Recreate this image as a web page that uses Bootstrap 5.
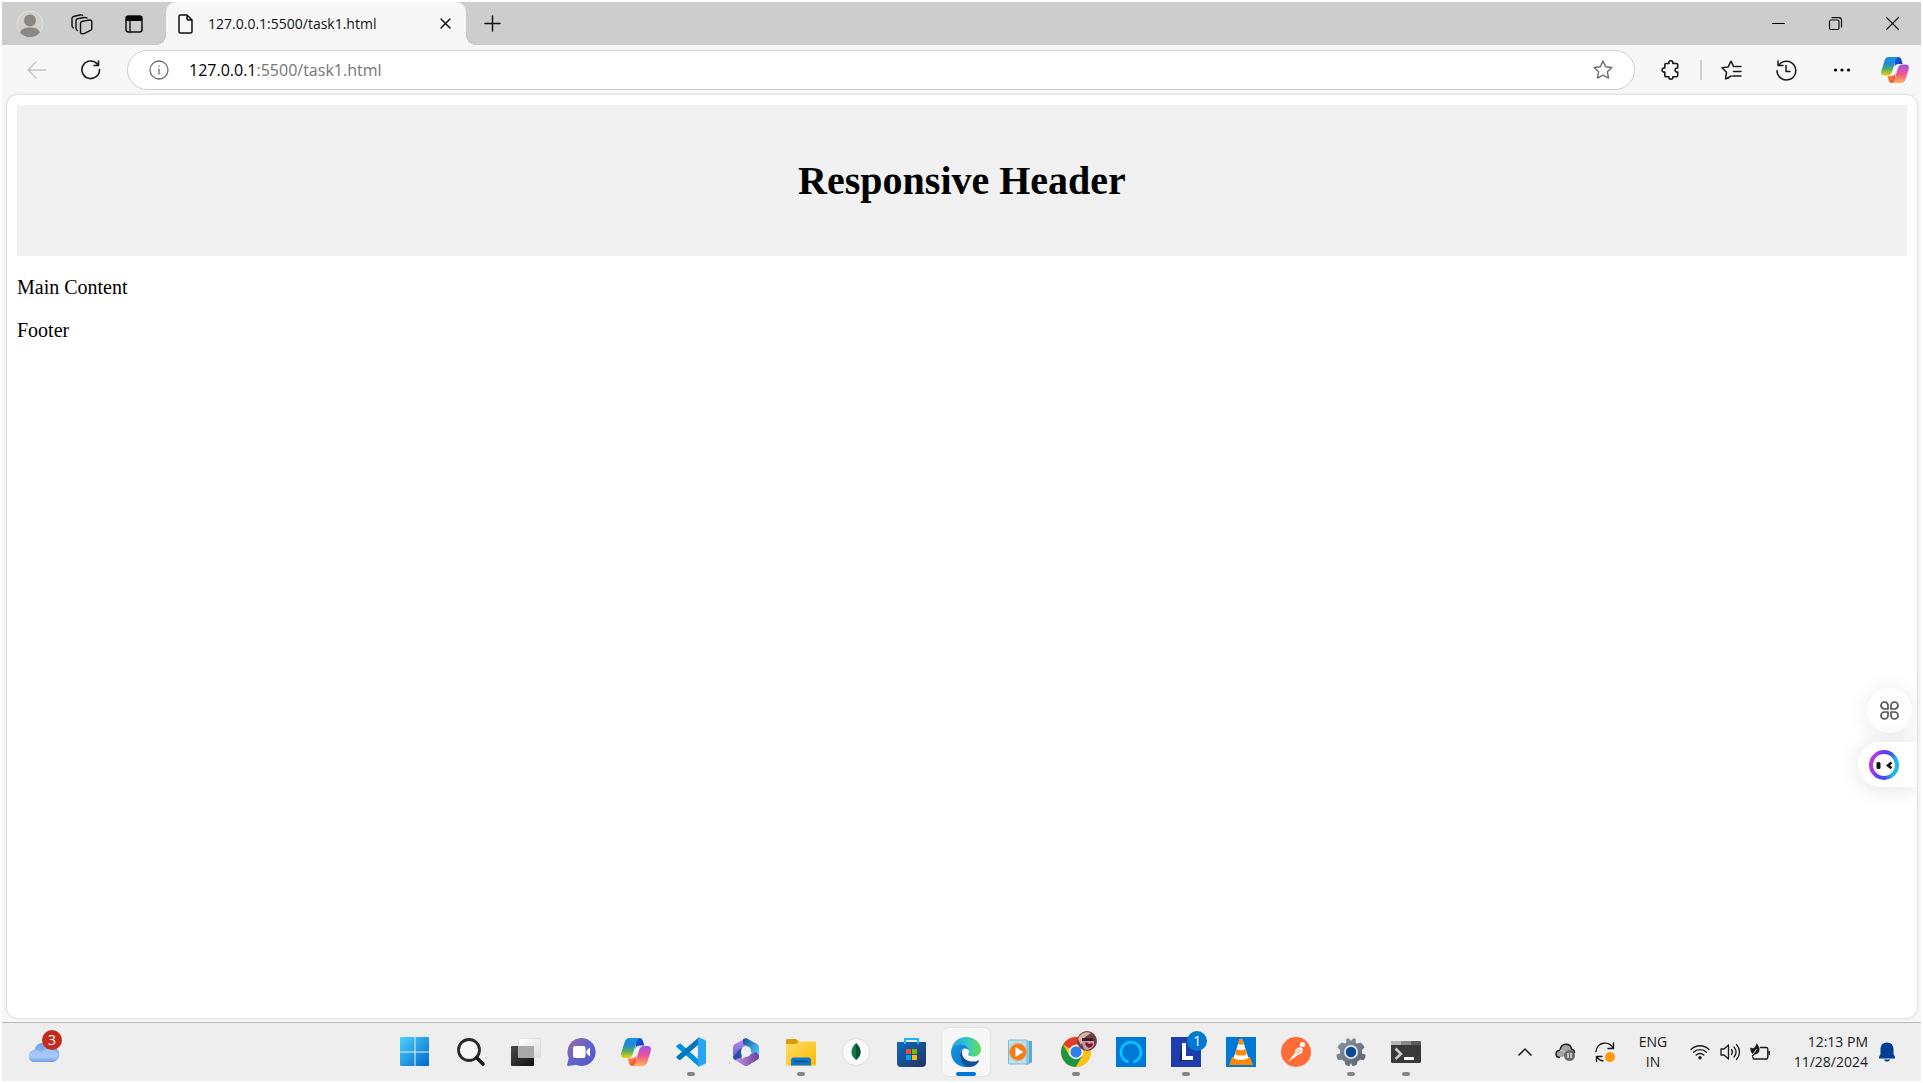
<!DOCTYPE html>
<html lang="en">
<head>
<meta charset="utf-8">
<meta name="viewport" content="width=device-width, initial-scale=1">
<title>127.0.0.1:5500/task1.html</title>
<link href="https://cdn.jsdelivr.net/npm/bootstrap@5.3.0/dist/css/bootstrap.min.css" rel="stylesheet">
<style>
  body { padding: 2px; background: #fff; color: #1b1b1b; font-family: "Open Sans", "Noto Sans", sans-serif; font-size: 14px; line-height: 20px; }
  svg { display: block; overflow: visible; }
  .screen { min-height: calc(100vh - 4px); }
  .ui-btn { padding: 0; border: 0; background: none; color: inherit; display: flex; align-items: center; justify-content: center; flex: none; }
  .ln { fill: none; stroke: currentColor; stroke-linecap: round; stroke-linejoin: round; }

  /* tab strip */
  .tab-strip { height: 43px; background: #cdcdcd; padding-left: 2px; color: #111; }
  .strip-btn { width: 52px; height: 43px; }
  .win-btn { width: 57px; height: 43px; }
  .page-tab { position: relative; width: 300px; height: 43px; margin-left: 6px; padding: 0 12px; background: #f7f7f7; border-radius: 10px 10px 0 0; font-size: 14px; }
  .page-tab::before, .page-tab::after { content: ""; position: absolute; bottom: 0; width: 10px; height: 10px; }
  .page-tab::before { right: 100%; background: radial-gradient(circle at 0 0, transparent 10px, #f7f7f7 10px); }
  .page-tab::after { left: 100%; background: radial-gradient(circle at 100% 0, transparent 10px, #f7f7f7 10px); }
  .page-tab a { color: #111; margin-left: 15px; }

  /* toolbar */
  .tool-strip { height: 50px; background: #f7f7f7; padding-left: 8px; color: #1b1b1b; }
  .nav-btn { width: 54px; height: 40px; }
  .tool-btn { width: 55px; height: 40px; }
  .address { height: 40px; margin-left: 9px; border: 1px solid #cfcfcf; border-radius: 20px; background: #fff; padding: 0 21px; font-size: 16px; }
  .address label { color: #000; margin-left: 20px; }
  .address input { border: 0; padding: 0; outline: 0; color: #767676; background: none; min-width: 0; }
  .tool-rule { width: 2px; height: 20px; background: #cfcfcf; margin: 0 2px 0 3px; }

  /* page view */
  .frame-area { background: #f7f7f7; padding: 0 4px 4px 5px; }
  .viewport-pane { background: #fff; border-radius: 11px; box-shadow: 0 0 3px rgba(0,0,0,.22); padding: 10px; overflow: hidden; color: #000; font-family: "Liberation Serif", serif; font-size: 20px; line-height: 23px; }
  .hero { background: #f1f1f1; padding: 53px 24px 52px; text-align: center; }
  .hero h1 { font-size: 40px; line-height: 46px; font-weight: 700; margin: 0; }
  .viewport-pane p { margin: 20px 0 0; }
  .floaters { position: absolute; right: 0; top: 593px; gap: 9px; }
  .float-round { width: 45px; height: 45px; border-radius: 50%; background: #fff; margin-right: 5px; box-shadow: 0 2px 24px rgba(0,0,0,.09); color: #505058; }
  .float-pill { width: 59px; height: 45px; border-radius: 23px 0 0 23px; background: #fff; padding-left: 11px; justify-content: flex-start; box-shadow: 0 2px 24px rgba(0,0,0,.11); }

  /* taskbar */
  .task-strip { height: 59px; background: #eee; border-top: 1px solid #b9b9b9; }
  .task-left { width: 20%; padding-left: 26px; }
  .task-list { padding-left: 1px; }
  .task-slot { width: 55px; }
  .task-slot:first-child { width: 57px; }
  .task-btn { position: relative; width: 48px; height: 48px; border-radius: 6px; }
  .task-btn.running::after { content: ""; position: absolute; bottom: 0; left: 20px; width: 8px; height: 4px; border-radius: 2px; background: #868686; }
  .task-btn.current { background: #f7f7f7; box-shadow: 0 0 1px 1px #e4e4e4; }
  .task-btn.current::after { left: 14px; width: 20px; background: #0078d4; }
  .count { position: absolute; width: 20px; height: 20px; border-radius: 50%; color: #fff; text-align: center; line-height: 20px; }
  .count-red { background: #c42b1c; left: 14px; top: -12px; }
  .count-blue { background: #0078d4; left: 25px; top: 3px; }
  .tray-btn { width: 40px; height: 48px; }
  .tray-lang { width: 56px; }
  .tray-status { gap: 10px; width: 80px; margin-left: 9px; }
  .tray-clock { width: 98px; text-align: right; }
  .tray-bell { width: 38px; margin-right: 15px; }
</style>
<script src="https://cdn.jsdelivr.net/npm/bootstrap@5.3.0/dist/js/bootstrap.bundle.min.js"></script>
</head>
<body>
<svg width="0" height="0" class="position-absolute" aria-hidden="true">
  <defs>
    <linearGradient id="cpA" x1="0" y1="0" x2="0" y2="1"><stop offset="0" stop-color="#1493e6"/><stop offset=".35" stop-color="#2388d8"/><stop offset=".65" stop-color="#4fae62"/><stop offset="1" stop-color="#f3cf14"/></linearGradient>
    <linearGradient id="cpB" x1="0" y1="0" x2="1" y2="1"><stop offset="0" stop-color="#1b63e0"/><stop offset="1" stop-color="#1334b8"/></linearGradient>
    <linearGradient id="cpC" x1="0" y1="0" x2="0" y2="1"><stop offset="0" stop-color="#a450ef"/><stop offset=".5" stop-color="#ee5490"/><stop offset="1" stop-color="#ffb35c"/></linearGradient>
    <linearGradient id="cpD" x1="0" y1="0" x2="1" y2="1"><stop offset="0" stop-color="#ffa04c"/><stop offset="1" stop-color="#e8402c"/></linearGradient>
    <symbol id="copilot" viewBox="0 0 30 28">
      <path fill="url(#cpB)" d="M15 0h3.500c2 0 2.800 1 3.400 3l1.400 4.500h-4c-3 0-4 1-4.800 3.500z"/>
      <path fill="url(#cpA)" d="M8.500 0H19c-2 .4-3 2-3.600 4L12 15.500c-.9 3-2.200 4.500-5.200 4.500H3.400C.3 20-.6 17.500.4 14.500L3.500 4.500C4.500 1.500 5.700 0 8.500 0z"/>
      <path fill="url(#cpD)" d="M15 28h-3.500c-2 0-2.800-1-3.400-3l-1.400-4.500h4c3 0 4-1 4.800-3.500z"/>
      <path fill="url(#cpC)" d="M21.500 28H11c2-.4 3-2 3.600-4L18 12.500c.9-3 2.200-4.500 5.200-4.500h3.400c3.100 0 4 2.500 3 5.500l-3.100 10c-1 3-2.200 4.500-5 4.500z"/>
    </symbol>
    <linearGradient id="winG" x1="0" y1="0" x2="1" y2="1"><stop offset="0" stop-color="#4dd2ff"/><stop offset="1" stop-color="#0067c9"/></linearGradient>
    <linearGradient id="darkG" x1="0" y1="0" x2="1" y2="1"><stop offset="0" stop-color="#4a4a4a"/><stop offset="1" stop-color="#111"/></linearGradient>
    <linearGradient id="lightG" x1="0" y1="0" x2="1" y2="1"><stop offset="0" stop-color="#fff"/><stop offset="1" stop-color="#ddd"/></linearGradient>
    <linearGradient id="chatG" x1="0" y1="0" x2="1" y2="1"><stop offset="0" stop-color="#9c6aa8"/><stop offset=".5" stop-color="#6364c9"/><stop offset="1" stop-color="#4f55c4"/></linearGradient>
    <linearGradient id="mA" x1="0" y1="0" x2="0" y2="1"><stop offset="0" stop-color="#c58bea"/><stop offset="1" stop-color="#4360c8"/></linearGradient>
    <linearGradient id="mB" x1="0" y1="0" x2="1" y2="1"><stop offset="0" stop-color="#164ba5"/><stop offset="1" stop-color="#56dcff"/></linearGradient>
    <linearGradient id="mC" x1="0" y1="0" x2="1" y2="0"><stop offset="0" stop-color="#c9a0ee"/><stop offset="1" stop-color="#6a3f98"/></linearGradient>
    <linearGradient id="foldG" x1="0" y1="0" x2="1" y2="1"><stop offset="0" stop-color="#ffdd68"/><stop offset="1" stop-color="#fcb900"/></linearGradient>
    <linearGradient id="storeG" x1="0" y1="0" x2="1" y2="1"><stop offset="0" stop-color="#0a6cc4"/><stop offset="1" stop-color="#27315f"/></linearGradient>
    <linearGradient id="edA" x1="0" y1="0" x2="1" y2="0"><stop offset="0" stop-color="#1ea3e0"/><stop offset=".5" stop-color="#2fc5cf"/><stop offset="1" stop-color="#68e04f"/></linearGradient>
    <linearGradient id="edB" x1="0" y1="0" x2="1" y2="1"><stop offset="0" stop-color="#1a93de"/><stop offset="1" stop-color="#0078d4"/></linearGradient>
    <linearGradient id="gearG" x1="0" y1="0" x2="1" y2="1"><stop offset="0" stop-color="#8d98a2"/><stop offset="1" stop-color="#56616b"/></linearGradient>
    <linearGradient id="ringG" x1="0" y1="0.800" x2="0.800" y2="1"><stop offset="0" stop-color="#b43ae0"/><stop offset=".35" stop-color="#5a3df5"/><stop offset=".7" stop-color="#3a55f5"/><stop offset="1" stop-color="#20b6ea"/></linearGradient>
    <linearGradient id="cloudG" x1="0" y1="0" x2="0" y2="1"><stop offset="0" stop-color="#6f9fe6"/><stop offset=".6" stop-color="#93b9f2"/><stop offset="1" stop-color="#6f9ce8"/></linearGradient>
    <linearGradient id="cloudF" x1="0" y1="0" x2="0" y2="1"><stop offset="0" stop-color="#9dc2f8"/><stop offset=".6" stop-color="#a9c9f8"/><stop offset="1" stop-color="#6f9ce8"/></linearGradient>
  </defs>
</svg>

<div class="screen d-flex flex-column">
  <header>
    <div class="tab-strip d-flex align-items-center">
      <button class="ui-btn strip-btn" aria-label="Profile"><svg width="28" height="28" viewBox="0 0 28 28"><circle cx="14" cy="14" r="13" fill="#d3d0cc" stroke="#e3e2df"/><circle cx="14" cy="10.500" r="6" fill="#8b8785"/><path d="M4 22.500C6 18 10 17.500 14 17.500s8 .5 10 5a13 13 0 0 1-20 0z" fill="#8b8785"/></svg></button>
      <button class="ui-btn strip-btn" aria-label="Workspaces"><svg width="22" height="22" viewBox="0 0 22 22" class="ln" stroke-width="1.400"><path d="M11.500 8.300L18.500 7q2.300-.2 2.300 1.800v6.400q0 1.500-1.300 2.200l-6 3q-3 1.200-4-.8v-9q0-2 2-2.300zM6.500 17.500Q5 16.800 5 15.200V7.800q0-1.600 1.500-2l6.500-1.300q1.800-.3 3 .5M2.300 14.800Q1 14 1 12.500V5.500q0-1.600 1.500-2L9 2q1.800-.3 2.600.4"/></svg></button>
      <button class="ui-btn strip-btn" aria-label="Tab actions"><svg width="18" height="18" viewBox="0 0 18 18"><rect x="1" y="1" width="16" height="16" rx="2.500" class="ln" stroke-width="1.500"/><path d="M1 6V3a2 2 0 0 1 2-2h12a2 2 0 0 1 2 2v3z"/><path d="M5 6v11" class="ln" stroke-width="1.400"/></svg></button>
      <div class="page-tab d-flex align-items-center">
        <svg width="15" height="20" viewBox="0 0 15 20" class="ln" stroke-width="1.500"><path d="M2.500 1H9l5 5v11.500c0 1-.5 1.500-1.500 1.500h-10C1.500 19 1 18.500 1 17.500v-15C1 1.500 1.500 1 2.500 1zM9 1v4c0 .7.300 1 1 1h4"/></svg>
        <a href="#view" class="text-decoration-none flex-grow-1">127.0.0.1:5500/task1.html</a>
        <button class="ui-btn" aria-label="Close tab"><svg width="16" height="11" viewBox="0 0 16 11" class="ln" stroke-width="1.500"><path d="M3 1l9 9M12 1l-9 9"/></svg></button>
      </div>
      <button class="ui-btn strip-btn" aria-label="New tab"><svg width="17" height="17" viewBox="0 0 17 17" class="ln" stroke-width="1.500"><path d="M8.500 1v15M1 8.500h15"/></svg></button>
      <div class="d-flex ms-auto">
        <button class="ui-btn win-btn" aria-label="Minimize"><svg width="13" height="13" viewBox="0 0 13 13"><path d="M0 6h13v1H0z"/></svg></button>
        <button class="ui-btn win-btn" aria-label="Restore"><svg width="13" height="13" viewBox="0 0 13 13" class="ln" stroke-width="1.200"><rect x=".5" y="3" width="9.500" height="9.500" rx="1.500"/><path d="M3 .6h7c1.600 0 2.500.9 2.500 2.500V10"/></svg></button>
        <button class="ui-btn win-btn" aria-label="Close"><svg width="13" height="13" viewBox="0 0 13 13" class="ln" stroke-width="1.200"><path d="M.5.5l12 12M12.500.5l-12 12"/></svg></button>
      </div>
    </div>
    <div class="tool-strip d-flex align-items-center">
      <button class="ui-btn nav-btn" aria-label="Back" disabled><svg width="20" height="18" viewBox="0 0 20 18" class="ln" stroke-width="1.300" color="#c4c4c4"><path d="M19 9H1M9 1L1 9l8 8"/></svg></button>
      <button class="ui-btn nav-btn" aria-label="Refresh"><svg width="20" height="20" viewBox="0 0 20 20" class="ln" stroke-width="1.600"><path d="M18.500 9.500A8.800 8.800 0 1 1 16.500 4.200M17.500 1v4.500H13"/></svg></button>
      <div class="address d-flex align-items-center flex-grow-1">
        <svg width="20" height="20" viewBox="0 0 20 20" class="ln" stroke-width="1.300" color="#6d6d6d"><circle cx="10" cy="10" r="9"/><path d="M10 9v5M10 6v.2"/></svg>
        <label for="url">127.0.0.1</label><input id="url" type="text" class="flex-grow-1" value=":5500/task1.html">
        <button class="ui-btn" aria-label="Favorite"><svg width="20" height="20" viewBox="0 0 20 20" class="ln" stroke-width="1.400" color="#6d6d6d"><path d="M10 1l2.700 5.700 6.200.8-4.500 4.300 1.100 6.300L10 15.200l-5.500 2.900 1.100-6.300L1.100 7.500l6.200-.8z"/></svg></button>
      </div>
      <button class="ui-btn nav-btn ms-2" aria-label="Extensions"><svg width="19" height="20" viewBox="0 0 19 20" class="ln" stroke-width="1.600"><path d="M5 3.500h3c-.5-1.500.4-2.700 1.900-2.700s2.400 1.200 1.900 2.700h3.700c.8 0 1.200.4 1.200 1.200V8c-3.400-.6-3.400 4.600 0 4v3.500c0 .8-.4 1.200-1.200 1.200h-3.700c.5 1.500-.4 2.600-1.900 2.600S7.500 18.200 8 16.700H5c-.8 0-1.200-.4-1.200-1.200V12C2.200 12.400 1 11.500 1 10s1.200-2.400 2.800-2V4.700c0-.8.400-1.200 1.200-1.200z"/></svg></button>
      <span class="tool-rule"></span>
      <button class="ui-btn tool-btn" aria-label="Favorites"><svg width="21" height="20" viewBox="0 0 21 20" class="ln" stroke-width="1.500"><path d="M7.500 18l-3 .8 1-6.500L1 7.800l6.200-.9L10 1.200l2.700 5.500M14 6.500h6M12.500 11.500H20M11.500 16H20M5 18.800l5-2.800"/></svg></button>
      <button class="ui-btn tool-btn" aria-label="History"><svg width="21" height="21" viewBox="0 0 21 21" class="ln" stroke-width="1.500"><path d="M1 10.500a9.400 9.400 0 1 0 2-5.700M2 1v4.500h5M10 5.500v6h4"/></svg></button>
      <button class="ui-btn tool-btn" aria-label="Settings and more"><svg width="18" height="4" viewBox="0 0 18 4"><circle cx="2.500" cy="2" r="1.600"/><circle cx="9" cy="2" r="1.600"/><circle cx="15.500" cy="2" r="1.600"/></svg></button>
      <button class="ui-btn strip-btn" aria-label="Copilot"><svg width="28" height="26"><use href="#copilot"/></svg></button>
    </div>
  </header>

  <div class="frame-area flex-grow-1 d-flex">
    <main id="view" class="viewport-pane flex-grow-1 position-relative">
      <div class="hero"><h1>Responsive Header</h1></div>
      <p>Main Content</p>
      <p>Footer</p>
      <div class="floaters d-flex flex-column align-items-end">
        <button class="ui-btn float-round" aria-label="Tools"><svg width="19" height="19" viewBox="0 0 19 19" class="ln" stroke-width="1.700"><path d="M8 8H4.500A3.500 3.500 0 1 1 8 4.500zM11 8V4.500A3.500 3.500 0 1 1 14.500 8zM8 11v3.500A3.500 3.500 0 1 1 4.500 11zM11 11h3.500a3.500 3.500 0 1 1-3.500 3.500z"/></svg></button>
        <button class="ui-btn float-pill" aria-label="Assistant"><svg width="30" height="30" viewBox="0 0 30 30"><circle cx="15" cy="15" r="13" fill="#fff" stroke="url(#ringG)" stroke-width="4"/><rect x="7.500" y="12" width="4" height="7" rx="1.500" fill="#111"/><path d="M22.500 12.500L19 15.500l3.500 2.800" fill="none" stroke="#111" stroke-width="2.600"/></svg></button>
      </div>
    </main>
  </div>

  <footer class="task-strip d-flex align-items-center">
    <div class="task-left">
      <button class="ui-btn position-relative" aria-label="Weather"><svg width="32" height="20" viewBox="0 0 32 20"><path d="M7 20a6 6 0 0 1-.5-12A8.500 8.500 0 0 1 22 4.500 7 7 0 0 1 25 20z" fill="url(#cloudG)"/><path d="M6 8.500c4-1 6 .5 7 2 2-3 6-4 10-3 5 .5 7 3 7 6 0 4-3 6.500-7 6.500H7c-3.500 0-6-2-6-5.500 0-3 2-5.500 5-6z" fill="url(#cloudF)"/></svg><span class="count count-red">3</span></button>
    </div>
    <nav class="task-list d-flex" aria-label="Taskbar">
      <div class="task-slot d-flex justify-content-center"><button class="ui-btn task-btn" aria-label="Start"><svg width="30" height="30" viewBox="0 0 30 30"><path fill="url(#winG)" d="M1 0h13.500v14.500H0V1a1 1 0 0 1 1-1zm14.500 0H28a1 1 0 0 1 1 1v13.500H15.500zM0 15.500h14.500V29H1a1 1 0 0 1-1-1zm15.500 0H29V28a1 1 0 0 1-1 1H15.500z"/></svg></button></div>
      <div class="task-slot d-flex justify-content-center"><button class="ui-btn task-btn" aria-label="Search"><svg width="28" height="28" viewBox="0 0 28 28"><circle cx="12" cy="12" r="10.500" fill="#f6f6f6" stroke="#2b2b2b" stroke-width="2.800"/><path d="M19.500 19.500L26 26" stroke="#1c1c1c" stroke-width="3.600" stroke-linecap="round"/></svg></button></div>
      <div class="task-slot d-flex justify-content-center"><button class="ui-btn task-btn" aria-label="Task view"><svg width="30" height="28" viewBox="0 0 30 28"><rect y="8" width="23" height="20" rx="1" fill="url(#darkG)"/><rect x="7.500" y=".5" width="22" height="19" rx="1" fill="url(#lightG)" stroke="#d6d6d6" stroke-width=".6"/><rect x="7.500" y="8" width="15.500" height="12" fill="#aaa"/></svg></button></div>
      <div class="task-slot d-flex justify-content-center"><button class="ui-btn task-btn" aria-label="Chat"><svg width="29" height="28" viewBox="0 0 29 28"><path d="M15 0a14 14 0 1 1-6 26.800L1.500 28C0 28 0 27 .3 26l1.500-6A14 14 0 0 1 15 0z" fill="url(#chatG)"/><rect x="6" y="8" width="12.500" height="12" rx="2" fill="#fff"/><path d="M19.500 12.500l3.500-3v9l-3.500-3z" fill="#fff"/></svg></button></div>
      <div class="task-slot d-flex justify-content-center"><button class="ui-btn task-btn" aria-label="Copilot app"><svg width="30" height="28"><use href="#copilot"/></svg></button></div>
      <div class="task-slot d-flex justify-content-center"><button class="ui-btn task-btn running" aria-label="Visual Studio Code"><svg width="30" height="30" viewBox="0 0 30 30"><path d="M2 7.500l1.500-.8c.6-.2 1-.1 1.500.3L22 22v7L.8 10.300c-.7-.6-.6-1.200-.1-1.700z" fill="#0091dc"/><path d="M2 22l1.500.9c.6.200 1 .1 1.500-.3L22 8V1L.8 19.200c-.7.600-.6 1.200-.1 1.700z" fill="#0078bd"/><path d="M22 0l7 3c.7.400 1 .8 1 1.500v21c0 .7-.3 1.200-1 1.500l-7 3z" fill="#26a5f2"/></svg></button></div>
      <div class="task-slot d-flex justify-content-center"><button class="ui-btn task-btn" aria-label="Microsoft 365"><svg width="26" height="28" viewBox="0 0 26 28"><path d="M13 0L2 6C.6 7 0 8 0 9.500v9L8.500 23V10L17 5z" fill="url(#mA)"/><path d="M10 1.200L13 0l11 6c1.400 1 2 2 2 3.500v9L17.500 14V10L10 6z" fill="url(#mB)"/><path d="M0 17v2c0 1.300.7 2.300 2 3l9 5.400c1.400.8 2.600.8 4 0L24 22c1.300-.8 2-1.700 2-3.200V17l-3-3-5.500 2L9 21z" fill="url(#mC)"/><path d="M0 18.500l8.500-9V19L2 22C.7 21 0 20 0 18.500z" fill="#2f4ca8"/><circle cx="13" cy="14" r="5" fill="#eee"/></svg></button></div>
      <div class="task-slot d-flex justify-content-center"><button class="ui-btn task-btn running" aria-label="File Explorer"><svg width="30" height="28" viewBox="0 0 30 28"><path d="M1.500 1H9c1 0 1.500.2 2 .8L13 4v5H0V2.500C0 1.500.5 1 1.500 1z" fill="#dc9c08"/><path d="M0 6h10l3-2.500h15.500c1 0 1.500.5 1.500 1.500v21c0 1-.5 1.500-1.500 1.500h-27C.5 27.500 0 27 0 26z" fill="url(#foldG)"/><path d="M5 27.500V22c0-1.500 1-2.500 2.500-2.500h15c1.500 0 2.500 1 2.500 2.500v5.500z" fill="#0f77c8"/><path d="M8.500 23.500h13" stroke="#064c87" stroke-width="1.500"/></svg></button></div>
      <div class="task-slot d-flex justify-content-center"><button class="ui-btn task-btn" aria-label="MongoDB Compass"><svg width="28" height="28" viewBox="0 0 28 28"><circle cx="14" cy="14" r="13.500" fill="#fbfbfb" stroke="#dcdcdc"/><path d="M14 5c3 3 4.500 6 4.500 9s-1.500 5.500-4.500 8c-3-2.500-4.500-5-4.500-8S11 8 14 5z" fill="#10774b"/><path d="M14 5c3 3 4.500 6 4.500 9s-1.500 5.500-4.500 8z" fill="#0a5238"/></svg></button></div>
      <div class="task-slot d-flex justify-content-center"><button class="ui-btn task-btn" aria-label="Microsoft Store"><svg width="29" height="29" viewBox="0 0 29 29"><path d="M0 4h29v21a4 4 0 0 1-4 4H4a4 4 0 0 1-4-4z" fill="url(#storeG)"/><path d="M8 6V1h13v5" fill="none" stroke="#1cb6f2" stroke-width="2"/><path fill="#f25022" d="M9 11h5v5H9z"/><path fill="#7fba00" d="M15 11h5v5h-5z"/><path fill="#00a4ef" d="M9 17h5v5H9z"/><path fill="#ffb900" d="M15 17h5v5h-5z"/></svg></button></div>
      <div class="task-slot d-flex justify-content-center"><button class="ui-btn task-btn running current" aria-label="Microsoft Edge"><svg width="30" height="30" viewBox="0 0 30 30"><path d="M.5 12C2 5 7.500 0 15 0c8.500 0 15 6 15 12.500 0 4.500-3.500 7-7.500 7-3.500 0-5.500-1-5.500-2.300 0-.8 1-1.200 1-3.200C18 10 13.500 7 9 7c-3.800 0-7 2-8.500 5z" fill="url(#edA)"/><path d="M0 15C0 10.500 4 7 9 7c4.500 0 9 3 9 6.500 0 0-1.500-2-4-2-3.500 0-5 3-5 6.500 0 5 4 10 9 11.600-1 .3-2 .4-3 .4C6.500 30 0 23.500 0 15z" fill="url(#edB)"/><path d="M12 12c-1.500.8-3 3-3 6 0 5.500 4 12 10 12 4 0 7.500-3 9-6 .3-.7-.3-1-1-.6-1.500.8-3 1.200-5 1.200-6 0-11-3.600-11-8.600 0-1.700.4-3.200 1-4z" fill="#124f96"/></svg></button></div>
      <div class="task-slot d-flex justify-content-center"><button class="ui-btn task-btn" aria-label="Media Player"><svg width="26" height="26" viewBox="0 0 26 26"><path d="M4 1l20 1v21l-5 3z" fill="#5aa9cf"/><path d="M2 1l19 1v22l-3 2z" fill="#8cc8e2"/><rect x=".5" y="1" width="18.500" height="24" rx="1" fill="#b9e0f0" stroke="#7db9d4"/><circle cx="10" cy="13" r="8.500" fill="#f07b1a" stroke="#f9a45a"/><path d="M7.500 8l8 5-8 5z" fill="#fff"/></svg></button></div>
      <div class="task-slot d-flex justify-content-center"><button class="ui-btn task-btn running" aria-label="Google Chrome"><svg width="30" height="30" viewBox="0 0 30 30"><circle cx="15" cy="15" r="15" fill="#fbc116"/><path d="M15 15L2 7.500A15 15 0 0 1 28 7.500H15z" fill="#e33b2e"/><path d="M15 15L8.500 18.700 2 7.500A15 15 0 0 0 15 30l6.500-11.200z" fill="#229342"/><path d="M15 7.500h13A15 15 0 0 1 15 30l6.500-11.200z" fill="#fbc116"/><circle cx="15" cy="15" r="7.200" fill="#fff"/><circle cx="15" cy="15" r="5.700" fill="#2f7de9"/><circle cx="26" cy="4" r="10" fill="#70404a"/><path d="M17 2c2-6 8-8 13-6l-6 4-4 8z" fill="#d9b5a8"/><path d="M21 4h12v4c-2 4-6 5-8 5s-4-5-4-9z" fill="#c89ba2"/><path d="M24 6c2-1 3 0 4 1 1-1 3-1 4 0 0 2-2 3-4 4-2-1-4-3-4-5z" fill="#7e1730"/><path d="M21 1h11v3H21z" fill="#3c1c26"/></svg></button></div>
      <div class="task-slot d-flex justify-content-center"><button class="ui-btn task-btn" aria-label="Alexa"><svg width="30" height="30" viewBox="0 0 30 30"><path fill="#0078d7" d="M0 0h30v30H0z"/><path d="M12.500 25A10 10 0 1 1 17.500 25" fill="none" stroke="#00caff" stroke-width="2.600"/></svg></button></div>
      <div class="task-slot d-flex justify-content-center"><button class="ui-btn task-btn running" aria-label="Lenovo Vantage"><svg width="30" height="30" viewBox="0 0 30 30"><path fill="#1f3eae" d="M0 0h30v30H0z"/><path d="M11 6L8 24h13l-3-4h-4z" fill="#14285f"/><path d="M11 6h4v13h7v4H11z" fill="#fff"/></svg><span class="count count-blue">1</span></button></div>
      <div class="task-slot d-flex justify-content-center"><button class="ui-btn task-btn" aria-label="VLC"><svg width="30" height="30" viewBox="0 0 30 30"><path fill="#0078d7" d="M0 0h30v30H0z"/><path d="M6 20h18l3 8H3z" fill="#ff8800"/><path d="M13.500 2.500c.6-1 2.400-1 3 0L22.500 21c-3 2.500-12 2.500-15 0z" fill="#f8f8f8"/><path d="M13.500 2.500c.6-1 2.400-1 3 0L18 7c-1.500 1-4.500 1-6 0zM10.500 12c2 1.600 7 1.600 9 0l1.500 5c-3 2-9 2-12 0z" fill="#ff8a0a"/></svg></button></div>
      <div class="task-slot d-flex justify-content-center"><button class="ui-btn task-btn" aria-label="Postman"><svg width="30" height="30" viewBox="0 0 30 30"><circle cx="15" cy="15" r="15" fill="#ff6c37"/><circle cx="21.500" cy="7.500" r="2.600" fill="#fff"/><path d="M19 10l3 2-1 4-4 2-10 7 6-8 2-5z" fill="#fff"/><path d="M12.500 17.500l5.500-5M16 17l4-4" stroke="#ff6c37" stroke-width=".8"/></svg></button></div>
      <div class="task-slot d-flex justify-content-center"><button class="ui-btn task-btn running" aria-label="Settings"><svg width="30" height="28" viewBox="0 0 30 28"><path d="M10.500 4.500L10 1.200Q12 0 12.700.3L15 3l2.300-2.700Q18 0 20 1.200l-.5 3.300 1.500 1L24.500 4.500Q28 7 28.500 9.500L26 12v3.500l3.500 1Q30 19 28 22l-4-.3-2.500 1.800L20.500 27q-2 1-4 1L15 25l-1.500 3q-2 0-4-1l-1-3.500L6 21.700 2 22Q0 19 .5 16.500l3.500-1V12L1.500 9.500Q2 7 5.500 4.500L9 5.500z" fill="url(#gearG)"/><circle cx="15" cy="14" r="7" fill="#dfe5ea"/><circle cx="15" cy="14" r="5.200" fill="#0b4a90"/></svg></button></div>
      <div class="task-slot d-flex justify-content-center"><button class="ui-btn task-btn running" aria-label="Terminal"><svg width="30" height="22" viewBox="0 0 30 22"><rect width="30" height="22" rx="1.500" fill="#3a3a3a"/><path d="M0 4V1.500C0 .5.500 0 1.500 0H10v4z" fill="#b6b6b6"/><path d="M10 0h10v4H10z" fill="#888"/><path d="M20 0h8.500c1 0 1.500.5 1.500 1.500V4H20z" fill="#5c5c5c"/><path d="M4.500 7.500L10 13l-5.500 5" fill="none" stroke="#c9c9c9" stroke-width="2.600"/><path d="M13 16h10v3H13z" fill="#fff"/></svg></button></div>
    </nav>
    <div class="d-flex align-items-center ms-auto">
      <button class="ui-btn tray-btn" aria-label="Hidden icons"><svg width="14" height="8" viewBox="0 0 14 8" class="ln" stroke-width="1.600"><path d="M1 7l6-6 6 6"/></svg></button>
      <button class="ui-btn tray-btn" aria-label="OneDrive"><svg width="20" height="18" viewBox="0 0 20 18"><path d="M5 14.500C2.500 14.500 1 13 1 11s1.500-3.600 4-3.800C5.500 3.500 8 1.200 11 1.200c3 0 5 1.800 5.500 4.800 2 .5 3 2 3 4" fill="#a6a6a6" stroke="#1b1b1b" stroke-width="1.500"/><path d="M5 7.200c3 0 5 2 8 4" stroke="#d5d5d5" fill="none"/><circle cx="14.500" cy="12.500" r="5.500" fill="#6b6b6b"/><path d="M13 10v5M16 10v5" stroke="#fff" stroke-width="1.200"/></svg></button>
      <button class="ui-btn tray-btn" aria-label="Windows Update"><svg width="20" height="20" viewBox="0 0 20 20" class="ln" stroke-width="1.400"><path d="M1 9.500A9 9 0 0 1 18 6M18.500 1v5.500H13M8 19c-3-.5-5-2-6-4M1.500 19.500V14.500H7"/><circle cx="15" cy="15" r="5" fill="#ff9800" stroke="none"/></svg></button>
      <button class="ui-btn tray-lang" aria-label="Language"><span>ENG<br>IN</span></button>
      <button class="ui-btn tray-status" aria-label="Network, volume, battery">
        <svg width="20" height="16" viewBox="0 0 20 16" class="ln" stroke-width="1.400"><path d="M1 5.500a12.700 12.700 0 0 1 18 0M3.500 8.300a9.200 9.200 0 0 1 13 0M6.200 11a5.400 5.400 0 0 1 7.600 0"/><circle cx="10" cy="13.700" r="1.700" fill="currentColor" stroke="none"/></svg>
        <svg width="20" height="18" viewBox="0 0 20 18" class="ln" stroke-width="1.300"><path d="M1 6h3l4.500-4v14L4 12H1zM11.500 6.500c1.200 1.500 1.200 3.500 0 5M14 4c2.500 3 2.500 7 0 10M16.500 1.500c4 4.500 4 10.500 0 15"/></svg>
        <svg width="20" height="18" viewBox="0 0 20 18" class="ln" stroke-width="1.400"><path d="M10.500 4.500h5.700c1 0 1.600.5 1.600 1.500v8.500c0 1-.6 1.500-1.600 1.500H4.500c-1 0-1.600-.5-1.600-1.500"/><path d="M18.500 8h1.500v4h-1.500z" fill="currentColor" stroke="none"/><path d="M6.500 0c1.800 2.500 3.300 4.500 3 7-.2 2.500-2 4.200-4.700 4.500L2.500 14l-.7-.8L3 11C.8 9.500 0 7 .5 4.500c1 .6 2 .9 2.800.7C4.800 4.500 6.300 2.500 6.500 0z" fill="currentColor" stroke="none"/><path d="M3 11.300L6.300 6.500" stroke="#eee" stroke-width=".9"/></svg>
      </button>
      <button class="ui-btn tray-clock justify-content-end"><time datetime="2024-11-28T12:13">12:13 PM<br>11/28/2024</time></button>
      <button class="ui-btn tray-bell" aria-label="Notifications"><svg width="16" height="20" viewBox="0 0 16 20"><path d="M8 .5c4 0 6.500 2.800 6.500 6.500v5l1.500 3v1.500H0V15l1.500-3V7C1.500 3.300 4 .5 8 .5zM5 17.500h6c-.4 1.500-1.500 2-3 2s-2.600-.5-3-2z" fill="#003e92"/></svg></button>
    </div>
  </footer>
</div>
</body>
</html>
